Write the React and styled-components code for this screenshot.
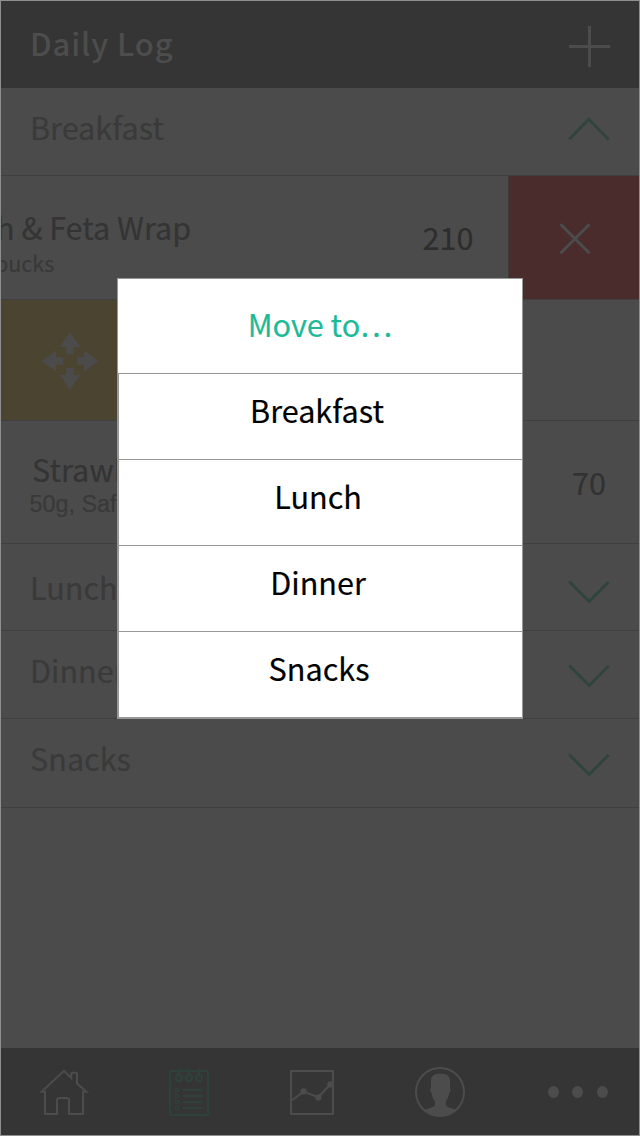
import React from "react";
import styled, { createGlobalStyle } from "styled-components";

const GlobalStyle = createGlobalStyle`
  *, *::before, *::after { box-sizing: border-box; }
  body { margin: 0; background: #4b4b4b; }
  svg { display: block; flex: none; }
`;

const Screen = styled.div`
  position: relative;
  display: flex;
  flex-direction: column;
  width: 640px;
  height: 1136px;
  border: 1px solid #8f8f8f;
  overflow: hidden;
  background: #4b4b4b;
  color: #3a3a3a;
  font-family: "Noto Sans CJK SC", "Noto Sans", sans-serif;
  font-size: 30.6px;
  line-height: 42px;
  white-space: nowrap;
  -webkit-text-stroke: 0.2px currentColor;
`;

const Header = styled.header`
  display: flex;
  justify-content: space-between;
  height: 87px;
  padding: 21px 29px 0 29px;
  background: #353535;
`;

const Title = styled.h1`
  margin: 0;
  color: #4d4d4d;
  font-size: 31px;
  font-weight: 500;
  line-height: 41px;
  letter-spacing: 0.9px;
  -webkit-text-stroke: 0;
`;

const PlusIcon = styled.svg`
  margin-top: 4px;
`;

const SectionRow = styled.section`
  display: flex;
  justify-content: space-between;
  height: ${(p) => p.$height}px;
  padding: ${(p) => p.$top}px 29px 0 29px;
  border-bottom: 1px solid #404040;
`;

const Chevron = styled.svg`
  margin-top: ${(p) => p.$top}px;
`;

const FoodRow = styled.div`
  display: flex;
  height: ${(p) => p.$height}px;
  border-bottom: 1px solid #404040;
`;

const FoodBody = styled.div`
  display: flex;
  flex: none;
  justify-content: space-between;
  width: 638px;
  height: 100%;
  margin-left: ${(p) => p.$shift}px;
  padding: 0 ${(p) => (p.$shift < 0 ? 34.5 : 33)}px 0 ${(p) => p.$inset}px;
  border-right: ${(p) => (p.$shift < 0 ? "1px solid #3c3c3c" : "none")};
`;

const FoodText = styled.div`
  display: flex;
  flex-direction: column;
  padding-top: ${(p) => p.$top}px;
  color: #343434;
`;

const Detail = styled.span`
  margin-left: ${(p) => p.$offset}px;
  color: #393939;
  font-size: ${(p) => (p.$plain ? 23.3 : 21.5)}px;
  line-height: ${(p) => (p.$plain ? 28 : 30)}px;
  font-family: ${(p) => (p.$plain ? '"Liberation Sans", Arial, sans-serif' : "inherit")};
`;

const Calories = styled.span`
  padding-top: ${(p) => p.$top}px;
  color: ${(p) => p.$color};
`;

const DeleteAction = styled.div`
  display: flex;
  flex: none;
  justify-content: center;
  align-items: center;
  width: 131px;
  height: 123px;
  background: #4a2c2d;
`;

const MoveAction = styled.div`
  display: flex;
  align-items: center;
  width: 131px;
  height: 100%;
  padding: 2px 0 0 39.6px;
  background: #4b4431;
`;

const NavBar = styled.nav`
  display: flex;
  height: 87px;
  margin-top: auto;
  padding-top: 18px;
  background: #353535;
`;

const NavIcon = styled.svg`
  margin-left: ${(p) => p.$gap}px;
  color: ${(p) => (p.$active ? "#2e423b" : "#4c4c4c")};
`;

const Dialog = styled.div`
  position: absolute;
  left: 116px;
  top: 277px;
  width: 406px;
  height: 441px;
  display: flex;
  flex-direction: column;
  border: 1px solid #979797;
  background: #fff;
  color: #000;
  text-align: center;
`;

const DialogTitle = styled.div`
  height: 94px;
  padding-top: 24px;
  color: #1eba98;
`;

const Option = styled.div`
  height: 86px;
  padding: 15px ${(p) => p.$nudge}px 0 0;
  border-top: 1px solid #979797;
  border-left: 1px solid #979797;
  &:last-child {
    height: 87px;
    border-bottom: 1px solid #979797;
  }
`;

const ARROW = "M29 0.5 L39.5 15 H32.7 V22 H25.3 V15 H18.5 Z";

function Toggle({ open, top }) {
  return (
    <Chevron $top={top} width="42" height="24" viewBox="0 0 42 24" fill="none" stroke="#2f443d" strokeWidth="2.8">
      <path d={open ? "M1.2 22.2 L20.8 2.2 L40.6 22.5" : "M1.2 1.5 L21.2 21.5 L40.6 2"} />
    </Chevron>
  );
}

export default function App() {
  return (
    <>
      <GlobalStyle />
      <Screen>
        <Header>
          <Title>Daily Log</Title>
          <PlusIcon width="42" height="42" stroke="#4c4c4c" strokeWidth="3">
            <path d="M1 20.5H42M21.5 0V41" />
          </PlusIcon>
        </Header>

        <SectionRow $height={88} $top={18}>
          Breakfast
          <Toggle open top={11} />
        </SectionRow>
        <FoodRow $height={124}>
          <FoodBody $shift={-130} $inset={28}>
            <FoodText $top={30}>
              <span>Spinach &amp; Feta Wrap</span>
              <Detail $offset={-22}>1 wrap, Starbucks</Detail>
            </FoodText>
            <Calories $top={40} $color="#2d2d2d">210</Calories>
          </FoodBody>
          <DeleteAction>
            <svg width="32" height="32" stroke="#4c4c4c" strokeWidth="3">
              <path d="M1.5 2.2L30.5 31.2M30.5 2.2L1.5 31.2" />
            </svg>
          </DeleteAction>
        </FoodRow>
        <FoodRow $height={121}>
          <MoveAction>
            <svg width="58" height="58" viewBox="0 0 58 58" fill="#4b4b4b">
              {[0, 90, 180, 270].map((a) => (
                <path key={a} d={ARROW} transform={`rotate(${a} 29 29)`} />
              ))}
            </svg>
          </MoveAction>
        </FoodRow>
        <FoodRow $height={123}>
          <FoodBody $shift={0} $inset={31}>
            <FoodText $top={27}>
              <span>Strawberries</span>
              <Detail $offset={-2.4} $plain>50g, Safeway</Detail>
            </FoodText>
            <Calories $top={40} $color="#323232">70</Calories>
          </FoodBody>
        </FoodRow>
        <SectionRow $height={87} $top={22}>
          Lunch
          <Toggle top={14} />
        </SectionRow>
        <SectionRow $height={88} $top={18}>
          Dinner
          <Toggle top={15} />
        </SectionRow>
        <SectionRow $height={89} $top={18}>
          Snacks
          <Toggle top={16} />
        </SectionRow>

        <NavBar>
          <NavIcon $gap={37} width="52" height="52" fill="none" stroke="currentColor" strokeWidth="2">
            <path d="M7 25.8H3.5L26 4.8L33.3 12V7.6Q33.3 6.8 34.1 6.8H38.2Q39 6.8 39 7.6V17.5L48.5 25.8H45V48H31V34.5Q31 32 28.7 32H21.3Q19 32 19 34.5V48H7Z" />
          </NavIcon>
          <NavIcon $active $gap={78} width="44" height="52" fill="none" stroke="currentColor" strokeWidth="2">
            <rect x="2" y="5" width="38" height="44" rx="1" />
            {[11, 21, 31].map((x) => (
              <g key={x}>
                <circle cx={x} cy="12" r="3.1" strokeWidth="2.2" />
                <path d={`M${x} 2.3V9`} />
              </g>
            ))}
            {[24, 30, 36, 42].map((y) => (
              <g key={y}>
                <circle cx="9" cy={y} r="1.6" strokeWidth="1.3" />
                <path d={`M15 ${y}H35`} />
              </g>
            ))}
          </NavIcon>
          <NavIcon $gap={76} width="48" height="52" fill="none" stroke="currentColor" strokeWidth="2">
            <rect x="3" y="5" width="42" height="43" />
            <path d="M4 34.3L15.7 25.6L30.3 31.3L42.3 18.3" />
            <g fill="currentColor" stroke="none">
              <circle cx="15.6" cy="25.3" r="3.1" />
              <circle cx="30.4" cy="31.4" r="3.1" />
              <circle cx="42.3" cy="18.4" r="3.1" />
            </g>
          </NavIcon>
          <NavIcon $gap={78} width="52" height="52" fill="none" stroke="currentColor" strokeWidth="2">
            <circle cx="26" cy="26" r="24" />
            <path
              fill="currentColor"
              stroke="none"
              d="M26.5 7.7C32.5 7.7 36 9.5 36 15V22.5C37.2 22.5 37 25 35.4 26.5C34.8 30 33.5 33 31.9 35.5V38.5C31.9 41 37 42 41.5 43.5C37.5 47.5 32 50 26 50C20 50 14.5 47.5 11.5 43.5C15.5 42 21 41 21 38.5V35.5C19.2 33 18 30 17.5 26.5C15.8 25 15.8 22.5 17 22.5V15C17 9.5 20.5 7.7 26.5 7.7Z"
            />
          </NavIcon>
          <NavIcon $gap={80} width="64" height="52" fill="currentColor">
            <ellipse cx="7.5" cy="26" rx="5.5" ry="6" />
            <ellipse cx="31.5" cy="26" rx="5.5" ry="6" />
            <ellipse cx="56.5" cy="26" rx="5.5" ry="6" />
          </NavIcon>
        </NavBar>

        <Dialog>
          <DialogTitle>Move to…</DialogTitle>
          <Option $nudge={7}>Breakfast</Option>
          <Option $nudge={5}>Lunch</Option>
          <Option $nudge={5}>Dinner</Option>
          <Option $nudge={3}>Snacks</Option>
        </Dialog>
      </Screen>
    </>
  );
}
